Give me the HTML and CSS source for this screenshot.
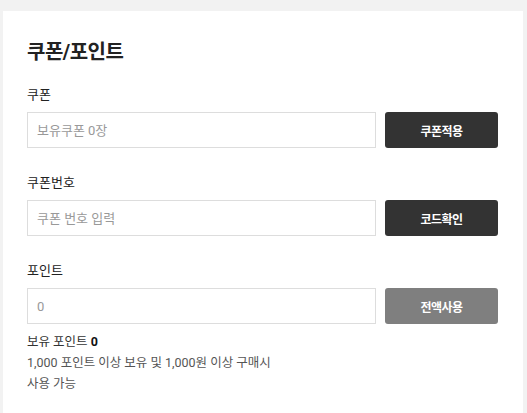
FILE: index.html
```html
<!DOCTYPE html>
<html lang="ko">
<head>
<meta charset="utf-8">
<title>쿠폰/포인트</title>
<link rel="stylesheet" href="styles.css">
</head>
<body>
<section class="panel">
  <h2 class="title">쿠폰/포인트</h2>

  <div class="group">
    <label class="label">쿠폰</label>
    <div class="row">
      <input class="field" type="text" placeholder="보유쿠폰 0장" readonly>
      <button class="btn btn-dark" type="button">쿠폰적용</button>
    </div>
  </div>

  <div class="group">
    <label class="label">쿠폰번호</label>
    <div class="row">
      <input class="field" type="text" placeholder="쿠폰 번호 입력">
      <button class="btn btn-dark" type="button">코드확인</button>
    </div>
  </div>

  <div class="group">
    <label class="label">포인트</label>
    <div class="row">
      <input class="field" type="text" placeholder="0">
      <button class="btn btn-gray" type="button">전액사용</button>
    </div>
    <div class="info">
      <p class="own">보유 포인트 <strong>0</strong></p>
      <p class="note">1,000 포인트 이상 보유 및 1,000원 이상 구매시<br>사용 가능</p>
    </div>
  </div>
</section>
</body>
</html>
```
FILE: styles.css
```css
html, body {
  margin: 0;
  padding: 0;
  height: 100%;
}
html {
  background: #f2f2f2;
}
body {
  font-family: Roboto, "Noto Sans CJK KR", sans-serif;
  color: #222;
  padding: 11px 4px 0 3px;
  box-sizing: border-box;
  overflow: hidden;
}
.panel {
  background: #fff;
  padding: 27px 25px 0 24px;
  height: 100%;
  box-sizing: border-box;
  display: flex;
  flex-direction: column;
  gap: 25px;
}
.title {
  margin: 0 0 -6px;
  font-size: 20px;
  line-height: 28px;
  font-weight: 700;
  letter-spacing: -0.5px;
  color: #222;
}
.group {
  display: flex;
  flex-direction: column;
  gap: 7px;
}
.label {
  font-size: 13px;
  line-height: 20px;
  color: #222;
}
.row {
  display: flex;
  gap: 9px;
}
.field {
  flex: 1;
  min-width: 0;
  height: 36px;
  box-sizing: border-box;
  border: 1px solid #ddd;
  border-radius: 0;
  padding: 0 9px;
  font-family: inherit;
  font-size: 13px;
  color: #333;
  outline: none;
}
.field::placeholder {
  color: #999;
}
.btn {
  width: 113px;
  height: 36px;
  border: 0;
  border-radius: 3px;
  color: #fff;
  font-family: inherit;
  font-size: 12px;
  font-weight: 700;
  letter-spacing: -0.5px;
  padding: 0;
}
.btn-dark {
  background: #333;
}
.btn-gray {
  background: #7f7f7f;
}
.info {
  font-size: 12.5px;
  line-height: 21px;
}
.info p {
  margin: 0;
}
.own {
  color: #333;
}
.own strong {
  color: #111;
}
.note {
  color: #555;
}
```
